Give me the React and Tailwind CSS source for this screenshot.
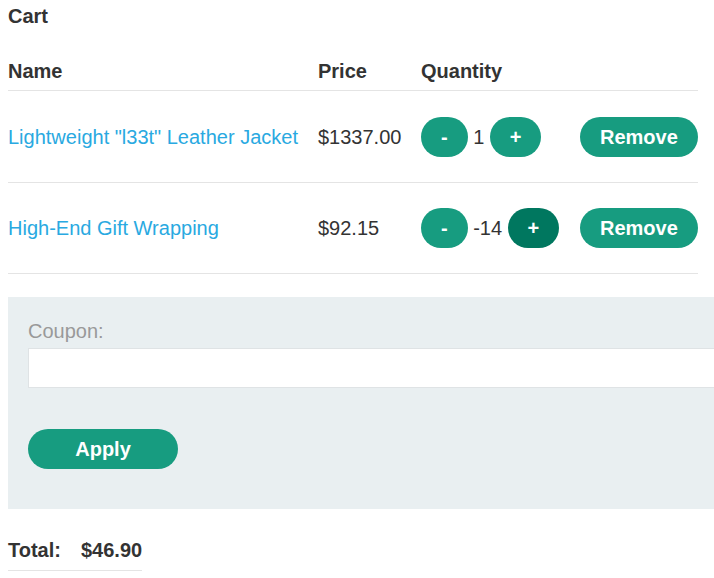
import React from 'react';

const items = [
    { name: 'Lightweight "l33t" Leather Jacket', price: '$1337.00', qty: 1, plusActive: false },
    { name: 'High-End Gift Wrapping', price: '$92.15', qty: -14, plusActive: true },
];

const pill = 'h-10 rounded-full px-5 font-bold text-white text-[20px] leading-none';

export default function App() {
    return (
        <div className="min-h-screen bg-white pl-2 text-[#333] text-[20px] font-['Liberation_Sans',Arial,sans-serif] overflow-hidden">
            <h1 className="pt-[5px] text-[20px] font-bold leading-[23px]">Cart</h1>

            <div className="mt-[24px] w-[690px]">
                <div className="grid h-[39px] grid-cols-[310px_103px_159px_118px] items-center border-b border-[#e4e4e4] font-bold">
                    <div>Name</div>
                    <div>Price</div>
                    <div>Quantity</div>
                    <div></div>
                </div>
                {items.map((item) => (
                    <div key={item.name} className="grid h-[91.5px] grid-cols-[310px_103px_159px_118px] items-center border-b border-[#e4e4e4]">
                        <a href="#" className="pt-[1px] text-[#29a9e1]">{item.name}</a>
                        <div className="pt-[1px]">{item.price}</div>
                        <div className="flex items-center pt-[1px]">
                            <button className={`${pill} bg-[#179c80]`}>-</button>
                            <span className="px-[5.5px]">{item.qty}</span>
                            <button className={`${pill} ${item.plusActive ? 'bg-[#00775f]' : 'bg-[#179c80]'}`}>+</button>
                        </div>
                        <div className="pt-[1px]">
                            <button className={`${pill} bg-[#179c80]`}>Remove</button>
                        </div>
                    </div>
                ))}
            </div>

            <div className="mt-[23px] h-[212px] bg-[#e9eff1] pl-5 pt-[23px]">
                <label className="block leading-[23px] text-[#999]">Coupon:</label>
                <input type="text" className="mt-[5px] block h-10 w-[calc(100%+20px)] border border-[#dfe3e5] bg-white px-2 outline-none" />
                <button className={`${pill} mt-[41px] w-[150px] bg-[#179c80]`}>Apply</button>
            </div>

            <div className="mt-[21px] inline-flex h-[41px] items-center border-b border-[#e4e4e4] font-bold">
                <span className="w-[73px]">Total:</span>
                <span>$46.90</span>
            </div>
        </div>
    );
}
